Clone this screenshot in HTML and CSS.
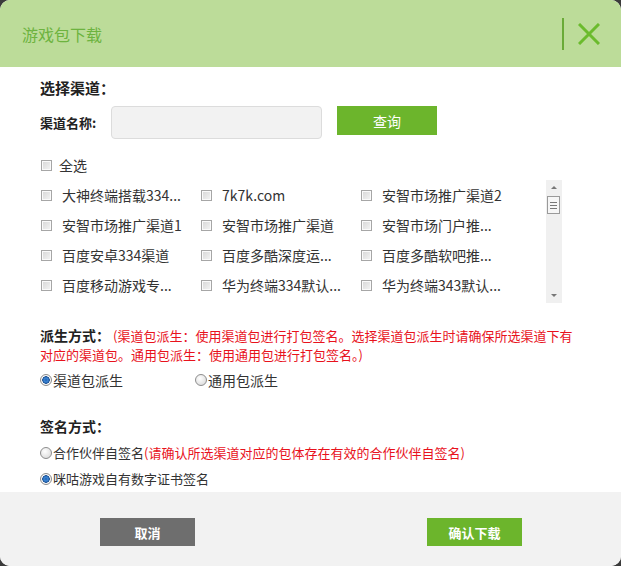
FILE: index.html
```html
<!DOCTYPE html>
<html lang="zh-CN">
<head>
    <meta charset="UTF-8">
    <title>游戏包下载</title>
    <link rel="stylesheet" href="styles.css">
</head>
<body>
    <div class="dialog">
        <div class="dlg-head">
            <div class="dlg-title">游戏包下载</div>
            <div class="dlg-close">
                <span class="close-line"></span>
                <svg class="close-x" width="22" height="22" viewBox="0 0 22 22">
                    <path d="M1 1 L21 21 M21 1 L1 21" stroke="#6bbb2d" stroke-width="3" fill="none"/>
                </svg>
            </div>
        </div>

        <div class="dlg-body">
            <div class="sec-title">选择渠道：</div>
            <div class="search-row">
                <span class="search-label">渠道名称:</span>
                <input class="search-input" type="text">
                <button class="btn btn-green btn-query">查询</button>
            </div>

            <div class="check-all">
                <span class="cb"></span><span>全选</span>
            </div>

            <div class="channel-box">
                <div class="channel-list">
                    <div class="ch"><span class="cb"></span><span>大神终端搭载334...</span></div>
                    <div class="ch"><span class="cb"></span><span>7k7k.com</span></div>
                    <div class="ch"><span class="cb"></span><span>安智市场推广渠道2</span></div>
                    <div class="ch"><span class="cb"></span><span>安智市场推广渠道1</span></div>
                    <div class="ch"><span class="cb"></span><span>安智市场推广渠道</span></div>
                    <div class="ch"><span class="cb"></span><span>安智市场门户推...</span></div>
                    <div class="ch"><span class="cb"></span><span>百度安卓334渠道</span></div>
                    <div class="ch"><span class="cb"></span><span>百度多酷深度运...</span></div>
                    <div class="ch"><span class="cb"></span><span>百度多酷软吧推...</span></div>
                    <div class="ch"><span class="cb"></span><span>百度移动游戏专...</span></div>
                    <div class="ch"><span class="cb"></span><span>华为终端334默认...</span></div>
                    <div class="ch"><span class="cb"></span><span>华为终端343默认...</span></div>
                </div>
                <div class="scrollbar">
                    <span class="sb-up"></span>
                    <span class="sb-thumb"><i></i><i></i><i></i></span>
                    <span class="sb-down"></span>
                </div>
            </div>

            <p class="derive-note"><b class="note-label">派生方式：</b><span class="red">(渠道包派生：使用渠道包进行打包签名。选择渠道包派生时请确保所选渠道下有对应的渠道包。通用包派生：使用通用包进行打包签名。)</span></p>
            <div class="radio-row">
                <label class="rd-item rd-wide"><span class="rd on"></span>渠道包派生</label>
                <label class="rd-item"><span class="rd"></span>通用包派生</label>
            </div>

            <div class="sec-title sign-title">签名方式：</div>
            <div class="sign-opt sign-first"><span class="rd"></span>合作伙伴自签名<span class="red">(请确认所选渠道对应的包体存在有效的合作伙伴自签名)</span></div>
            <div class="sign-opt"><span class="rd on"></span>咪咕游戏自有数字证书签名</div>
        </div>

        <div class="dlg-foot">
            <button class="btn btn-gray">取消</button>
            <button class="btn btn-green btn-ok">确认下载</button>
        </div>
    </div>
</body>
</html>
```

FILE: styles.css
```css
body {
    margin: 0;
    background: #3b3b3b;
    font-family: "Noto Sans CJK SC", "Liberation Sans", sans-serif;
    color: #333;
}
.dialog {
    width: 621px;
    height: 566px;
    background: #fff;
    border-radius: 10px;
    overflow: hidden;
    display: flex;
    flex-direction: column;
}
.dlg-head {
    height: 67px;
    flex: none;
    background: #bcdc99;
    display: flex;
    align-items: center;
    justify-content: space-between;
    padding: 0 21px 0 22px;
}
.dlg-title {
    font-size: 16px;
    color: #6db33f;
}
.dlg-close {
    display: flex;
    align-items: center;
    gap: 14px;
}
.close-line {
    width: 2px;
    height: 32px;
    background: #6aab38;
}
.close-x {
    display: block;
}
.dlg-body {
    flex: 1;
    padding: 10px 40px 0 40px;
}
.sec-title {
    font-size: 15px;
    font-weight: bold;
    color: #222;
    line-height: 22px;
}
.search-row {
    display: flex;
    align-items: flex-start;
    margin-top: 7px;
}
.search-label {
    width: 71px;
    font-size: 13px;
    font-weight: bold;
    color: #222;
    line-height: 33px;
}
.search-input {
    width: 211px;
    height: 33px;
    box-sizing: border-box;
    background: #f2f2f2;
    border: 1px solid #dcdcdc;
    border-radius: 4px;
    margin: 0;
}
.btn {
    border: none;
    color: #fff;
    font-family: inherit;
    cursor: pointer;
    padding: 0;
}
.btn-green {
    background: #6cb52c;
}
.btn-query {
    width: 100px;
    height: 29px;
    margin-left: 15px;
    font-size: 14px;
}
.check-all {
    display: flex;
    align-items: center;
    gap: 7px;
    height: 30px;
    margin-top: 11px;
    font-size: 14px;
}
.cb {
    width: 9px;
    height: 9px;
    flex: none;
    margin-left: 1px;
    border: 1px solid #a6a6a6;
    background: linear-gradient(135deg, #d6d6d6, #f4f4f4);
    box-shadow: inset 0 0 0 1px #fafafa;
}
.channel-box {
    display: flex;
    height: 123px;
}
.channel-list {
    width: 506px;
    display: grid;
    grid-template-columns: 160px 160px 160px;
    grid-auto-rows: 30px;
    overflow: hidden;
}
.ch {
    display: flex;
    align-items: center;
    gap: 10px;
    font-size: 14px;
    white-space: nowrap;
}
.scrollbar {
    width: 16px;
    background: #f0f0f0;
    position: relative;
}
.sb-up, .sb-down {
    position: absolute;
    left: 5px;
    width: 0;
    height: 0;
    border-left: 3px solid transparent;
    border-right: 3px solid transparent;
}
.sb-up {
    top: 6px;
    border-bottom: 3px solid #777;
}
.sb-down {
    bottom: 6px;
    border-top: 3px solid #777;
}
.sb-thumb {
    position: absolute;
    top: 16px;
    left: 1px;
    width: 11px;
    height: 16px;
    border: 1px solid #9a9a9a;
    background: #f6f6f6;
    display: flex;
    flex-direction: column;
    justify-content: center;
    align-items: center;
    gap: 2px;
}
.sb-thumb i {
    display: block;
    width: 7px;
    height: 1px;
    background: #777;
}
.derive-note {
    margin: 23px 0 0 0;
    font-size: 13px;
    line-height: 19px;
    width: 540px;
}
.note-label {
    font-size: 14px;
    color: #222;
    margin-right: 3px;
}
.red {
    color: #e8121c;
}
.radio-row {
    display: flex;
    margin-top: 6px;
    font-size: 14px;
    line-height: 20px;
}
.rd-item {
    display: flex;
    align-items: center;
}
.rd-wide {
    width: 155px;
}
.rd {
    width: 10px;
    height: 10px;
    flex: none;
    border-radius: 50%;
    border: 1px solid #8d8d8d;
    background: radial-gradient(circle at 40% 35%, #fff, #d4d4d4);
    margin: 0 1px 0 0;
}
.rd.on {
    background: radial-gradient(circle, #1f5fb0 0, #3b86d6 2px, #1a4f92 3.5px, #fff 4px, #d8d8d8 100%);
}
.sign-title {
    margin-top: 25px;
    font-size: 14px;
}
.sign-opt {
    display: flex;
    align-items: center;
    font-size: 13px;
    line-height: 26px;
}
.sign-first {
    margin-top: 3px;
}
.dlg-foot {
    height: 74px;
    flex: none;
    background: #f2f2f2;
    display: flex;
    align-items: flex-start;
    padding: 26px 0 0 100px;
    box-sizing: border-box;
}
.dlg-foot .btn {
    width: 95px;
    height: 28px;
    font-size: 13px;
    font-weight: bold;
}
.btn-gray {
    background: #6e6e6e;
}
.btn-ok {
    margin-left: 232px;
}
```
